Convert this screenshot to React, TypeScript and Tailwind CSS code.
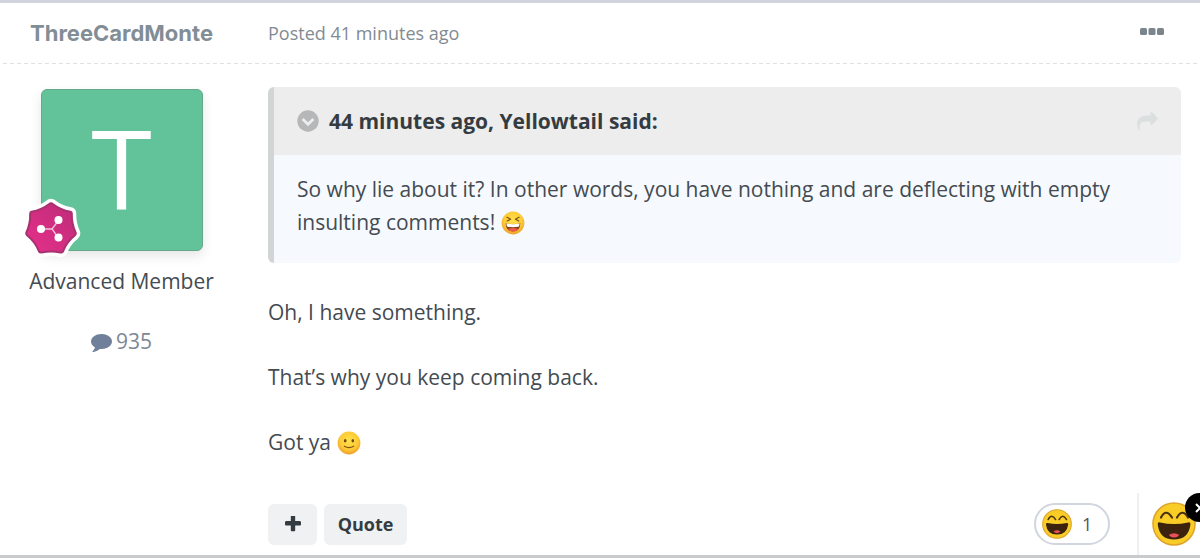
import type { ReactNode } from 'react'

const paragraphs = ['Oh, I have something.', 'That’s why you keep coming back.']

function EllipsisIcon() {
  return (
    <svg viewBox="0 0 24 7" className="w-6 h-[7px]" fill="#7b858d">
      <rect x="0" y="0" width="7" height="7" rx="1.5" />
      <rect x="8.5" y="0" width="7" height="7" rx="1.5" />
      <rect x="17" y="0" width="7" height="7" rx="1.5" />
    </svg>
  )
}

function ShareIcon() {
  return (
    <svg viewBox="0 0 1792 1792" className="w-[21px] h-[21px]" fill="currentColor">
      <path d="M1792 640q0 26-19 45l-512 512q-19 19-45 19t-45-19-19-45v-256h-224q-98 0-175.5 6t-154 21.5-133 42.5-105.5 69.5-80 101-48.5 138.5-17.5 181q0 55 5 123 0 6 2.5 23.5t2.5 26.5q0 15-8.5 25t-23.5 10q-16 0-28-17-7-9-13-22t-13.5-30-10.5-24q-127-285-127-451 0-199 53-333 162-403 875-403h224v-256q0-26 19-45t45-19 45 19l512 512q19 19 19 45z" />
    </svg>
  )
}

function CommentIcon() {
  return (
    <svg viewBox="0 0 1792 1792" className="w-[21px] h-[21px]" fill="currentColor">
      <path d="M1792 896q0 174-120 321.5t-326 233-450 85.5q-70 0-145-8-198 175-460 242-49 14-114 22-17 2-30.5-9t-17.5-29v-1q-3-4-.5-12t2-10 4.5-9.5l6-9 7-8.500 8-9q7-8 31-34.500t34.500-38 31-39.500 32.500-51 27-59 26-76q-157-89-247.500-220t-90.500-281q0-130 71-248.500t191-204.500 286-136.500 348-50.500q244 0 450 85.500t326 233 120 321.500z" />
    </svg>
  )
}

function PlusIcon() {
  return (
    <svg viewBox="192 192 1408 1408" className="w-4 h-4" fill="currentColor">
      <path d="M1600 736v192q0 40-28 68t-68 28h-416v416q0 40-28 68t-68 28h-192q-40 0-68-28t-28-68v-416h-416q-40 0-68-28t-28-68v-192q0-40 28-68t68-28h416v-416q0-40 28-68t68-28h192q40 0 68 28t28 68v416h416q40 0 68 28t28 68z" />
    </svg>
  )
}

function ChevronCircleIcon() {
  return (
    <svg viewBox="0 0 22 22" className="w-[22px] h-[22px]">
      <circle cx="11" cy="11" r="10.7" fill="#b5b7b9" />
      <path d="M5.6 9.1 11 14.3l5.4-5.2" fill="none" stroke="#ededed" strokeWidth="2.8" />
    </svg>
  )
}

function RankBadge() {
  const shape =
    'M29 4.500Q30 4 31 4.500Q39.500 11 49.500 12.700Q50.800 13.300 50.800 14.500Q50.500 25 54.800 34Q55 35.500 54 36.300Q45.500 43 42 52.500Q41 53.700 39.500 53.500Q30 51.500 20.500 53.500Q19 53.700 18 52.500Q14.500 43 6 36.300Q5 35.500 5.200 34Q9.500 25 9.200 14.500Q9.200 13.300 10.500 12.700Q20.500 11 29 4.500Z'
  return (
    <svg viewBox="0 0 60 60" className="w-[60px] h-[60px] overflow-visible">
      <defs>
        <linearGradient id="rank" x1="0" y1="1" x2="1" y2="0">
          <stop offset="0" stopColor="#e5308a" />
          <stop offset="1" stopColor="#bd2c78" />
        </linearGradient>
      </defs>
      <path d={shape} fill="#fff" stroke="#fff" strokeWidth="9" strokeLinejoin="round" />
      <path d={shape} fill="url(#rank)" stroke="#a8316f" strokeWidth="2" strokeLinejoin="round" />
      <path d="M20 30H31M37.5 21.5 31 30l6.500 9" fill="none" stroke="#f6c4dc" strokeWidth="1.3" />
      <circle cx="20" cy="30" r="4" fill="#fff" />
      <circle cx="37.500" cy="21" r="4" fill="#fff" />
      <circle cx="37.500" cy="38.500" r="4" fill="#fff" />
    </svg>
  )
}

function EmojiFace({ id, label, children }: { id: string; label: string; children: ReactNode }) {
  return (
    <svg
      viewBox="0 0 24 24"
      role="img"
      aria-label={label}
      className="inline-block w-6 h-6 align-[-5px]"
    >
      <defs>
        <radialGradient id={id} cx=".5" cy=".4" r=".6">
          <stop offset="0" stopColor="#ffe14a" />
          <stop offset=".65" stopColor="#fdcb35" />
          <stop offset="1" stopColor="#ee9f2c" />
        </radialGradient>
      </defs>
      <circle cx="12" cy="12" r="11.400" fill={`url(#${id})`} />
      {children}
    </svg>
  )
}

function SquintEmoji() {
  return (
    <EmojiFace id="squint" label="laughing">
      <path
        d="M6 6.200 9.600 8.200 6.200 10M18 6.200 14.400 8.200l3.400 1.800"
        fill="none"
        stroke="#7a5218"
        strokeWidth="1.2"
        strokeLinecap="round"
        strokeLinejoin="round"
      />
      <path d="M4.600 12.300q7.400 1.700 14.800 0-.4 8.200-7.400 8.200T4.600 12.300Z" fill="#83401b" />
      <path d="M5.400 12.500q6.600 1.400 13.200 0-.1 3.100-1.200 3.300-5.400.8-10.800 0-1.100-.2-1.200-3.300Z" fill="#fff" />
      <path d="M7 18q5-2.200 10 0-2 2.500-5 2.500T7 18Z" fill="#f0584d" />
    </EmojiFace>
  )
}

function SmileEmoji() {
  return (
    <EmojiFace id="smile" label="slight smile">
      <ellipse cx="8.200" cy="9.700" rx="1.300" ry="1.800" fill="#70451a" />
      <ellipse cx="15.800" cy="9.700" rx="1.300" ry="1.800" fill="#70451a" />
      <path
        d="M7.300 15.200q4.700 2.800 9.400 0"
        fill="none"
        stroke="#825018"
        strokeWidth="1.100"
        strokeLinecap="round"
      />
    </EmojiFace>
  )
}

function HahaIcon({ className }: { className: string }) {
  return (
    <svg viewBox="0 0 44 44" role="img" aria-label="Haha" className={className}>
      <circle cx="22" cy="22" r="21" fill="#f9cd26" stroke="#dda52b" strokeWidth="1.600" />
      <path
        d="M9 15.500q5-9.500 11 0M25 15.500q5.500-9.500 11 0"
        fill="none"
        stroke="#4a3111"
        strokeWidth="2.200"
        strokeLinecap="round"
      />
      <path
        d="M5.800 22.800q-.5-2.800 2.300-2.400 14 3.200 28 0 2.800-.4 2.300 2.400Q36.500 37.500 22 37.500T5.800 22.800Z"
        fill="#3b230d"
      />
      <path d="M17 32.800q5-3.200 10 0-1 2.600-5 2.600t-5-2.600Z" fill="#e8505a" />
    </svg>
  )
}

function Author() {
  return (
    <aside className="w-[243px] shrink-0 flex flex-col items-center pt-[25px]">
      <div className="relative">
        <a
          href="#profile"
          aria-label="ThreeCardMonte's profile"
          className="flex w-[162px] h-[162px] items-center justify-center rounded-md border border-[#65a98a] bg-[#62c299] pb-1.5 text-[110px] leading-none font-medium text-white shadow-[0_5px_12px_rgba(0,0,0,0.1)]"
        >
          T
        </a>
        <div className="absolute -left-5 -bottom-2">
          <RankBadge />
        </div>
      </div>
      <p className="mt-3.5 text-[21px] leading-8">Advanced Member</p>
      <a href="#posts" className="mt-7 flex items-center gap-1 text-[21px] leading-8 text-[#71809a]">
        <CommentIcon />
        <span className="text-[#7d8795]">935</span>
      </a>
    </aside>
  )
}

function QuoteBlock() {
  return (
    <blockquote className="overflow-hidden rounded-md border-l-[6px] border-[#d2d5d6] bg-[#f6fafe]">
      <div className="flex h-[68px] items-center gap-2.5 bg-[#ededed] px-[23px] text-[#353c41]">
        <button type="button" aria-label="Collapse quote">
          <ChevronCircleIcon />
        </button>
        <span className="flex-1 font-bold">44 minutes ago, Yellowtail said:</span>
        <a href="#source" aria-label="Go to quoted post" className="text-[#dcdfe0]">
          <ShareIcon />
        </a>
      </div>
      <p className="pt-[18px] pb-6 px-[23px]">
        So why lie about it? In other words, you have nothing and are deflecting with empty insulting
        comments! <SquintEmoji />
      </p>
    </blockquote>
  )
}

export default function App() {
  return (
    <article className="overflow-hidden border-t-[3px] border-b-[3px] border-t-[#d2d3de] border-b-[#c8cacb] bg-white font-['Open_Sans',sans-serif] text-[#444b51]">
      <header className="flex h-[60px] items-center pr-9">
        <h3 className="w-[243px] shrink-0 text-center font-['Inter',sans-serif] text-[22px] font-bold text-[#828d96]">
          <a href="#profile">ThreeCardMonte</a>
        </h3>
        <a href="#post" className="ml-[25px] flex-1 text-[18px] text-[#828b93]">
          Posted 41 minutes ago
        </a>
        <button type="button" aria-label="More options" className="pb-1">
          <EllipsisIcon />
        </button>
      </header>
      <div className="h-px bg-[repeating-linear-gradient(90deg,transparent_0_3px,#dfe1e3_3px_7px)]" />

      <div className="flex">
        <Author />
        <div className="ml-[25px] min-w-0 flex-1">
          <div className="pt-[23px] pr-[19px] text-[21px] leading-[33px]">
            <QuoteBlock />
            <div className="mt-[33px] flex flex-col gap-8">
              {paragraphs.map((text) => (
                <p key={text}>{text}</p>
              ))}
              <p>
                Got ya <SmileEmoji />
              </p>
            </div>
          </div>

          <footer className="mt-[34px] flex h-[62px] items-center text-[#353c41]">
            <button
              type="button"
              aria-label="Multi-quote"
              className="flex h-[41px] w-[49px] items-center justify-center rounded-md bg-[#f0f1f3]"
            >
              <PlusIcon />
            </button>
            <button
              type="button"
              className="ml-[7px] h-[41px] w-[83px] rounded-md bg-[#f0f1f3] text-[18px] font-bold"
            >
              Quote
            </button>
            <button
              type="button"
              className="ml-auto flex h-[42px] w-[76px] items-center gap-2.5 rounded-full border-2 border-[#d1d5df] pl-1.5 text-[18px] text-[#555]"
            >
              <HahaIcon className="w-[30px] h-[30px]" />1
            </button>
            <div className="relative ml-[27px] flex h-full w-[63px] items-center border-l-2 border-[#eeeff1] pl-[13px]">
              <button type="button" aria-label="React">
                <HahaIcon className="w-11 h-11" />
              </button>
              <button
                type="button"
                aria-label="Remove reaction"
                className="absolute -right-[14px] top-0 flex h-[29px] w-[29px] items-center justify-center rounded-full bg-black"
              >
                <svg viewBox="0 0 10 10" className="w-2.5 h-2.5" stroke="#fff" strokeWidth="2">
                  <path d="M1 1l8 8M9 1L1 9" />
                </svg>
              </button>
            </div>
          </footer>
        </div>
      </div>
    </article>
  )
}
